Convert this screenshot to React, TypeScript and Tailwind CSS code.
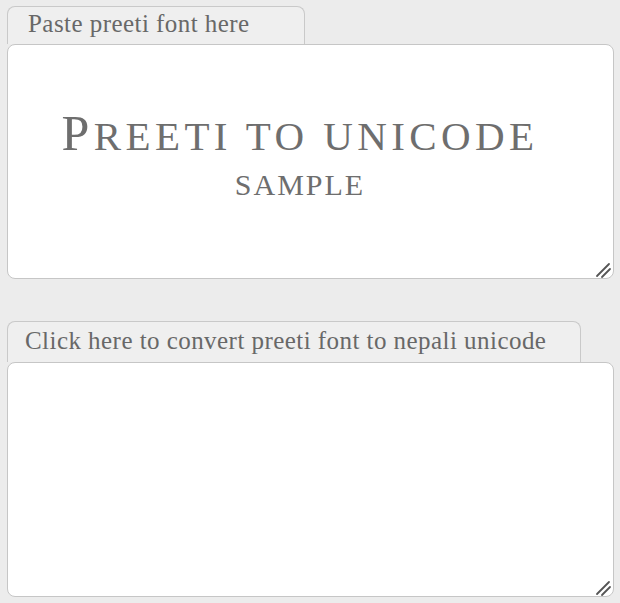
import { useState } from 'react';

const serif = { fontFamily: '"Liberation Serif", "DejaVu Serif", serif' };

const Tab = ({ label, className }: { label: string; className: string }) => (
  <div
    className={`rounded-t-[8px] border border-b-0 border-[#c9c9c9] bg-[#efefef] text-[25px] leading-none tracking-[0.45px] text-[#686868] ${className}`}
    style={serif}
  >
    {label}
  </div>
);

// Safari-style resize grip drawn over the textarea corner
const Grip = () => (
  <svg
    className="pointer-events-none absolute bottom-0 right-0"
    width="18"
    height="18"
    viewBox="0 0 18 18"
  >
    <path d="M2 15 L14 3 M7 16 L15 8" stroke="#555" strokeWidth="1.8" strokeLinecap="round" />
  </svg>
);

const Box = ({ value, onChange, children }: { value: string; onChange: (v: string) => void; children?: React.ReactNode }) => (
  <div className="relative">
    <textarea
      value={value}
      onChange={(e) => onChange(e.target.value)}
      className="block h-[235px] w-[607px] rounded-[8px] border border-[#c6c6c6] bg-white outline-none resize-none"
    />
    {children}
    <Grip />
  </div>
);

const App = () => {
  const [source, setSource] = useState('');
  const [output, setOutput] = useState('');

  return (
    <div className="min-h-screen w-[620px] bg-[#ececec] px-[7px] pt-[6px]">
      <Tab label="Paste preeti font here" className="h-[38px] w-[298px] pl-[20px] pt-[4px]" />
      <Box value={source} onChange={setSource}>
        {!source && (
          <div
            className="pointer-events-none absolute inset-0 flex flex-col items-center pt-[64px] pr-[20px] text-[#6e6e6e]"
            style={serif}
          >
            <div className="leading-[50px] tracking-[4.4px] whitespace-nowrap">
              <span className="text-[50px]">P</span>
              <span className="text-[41px]">REETI TO UNICODE</span>
            </div>
            <span className="text-[30px] leading-[30px] tracking-[2px]">SAMPLE</span>
          </div>
        )}
      </Box>

      <Tab label="Click here to convert preeti font to nepali unicode" className="mt-[42px] h-[41px] w-[574px] pl-[17px] pt-[6px]" />
      <Box value={output} onChange={setOutput} />
    </div>
  );
};

export default App;
